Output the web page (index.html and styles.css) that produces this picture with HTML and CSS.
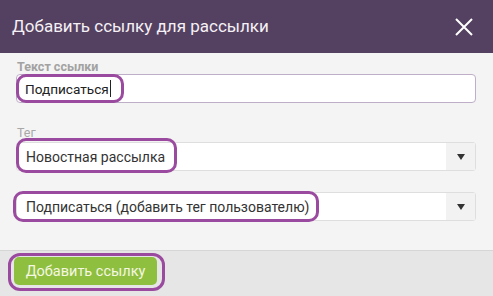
FILE: index.html
```html
<!DOCTYPE html>
<html lang="ru">
<head>
    <meta charset="UTF-8">
    <meta name="viewport" content="width=device-width, initial-scale=1.0">
    <title>Добавить ссылку для рассылки</title>
    <link rel="stylesheet" href="styles.css">
</head>
<body>
    <div class="modal">
        <div class="modal-head">
            <h2>Добавить ссылку для рассылки</h2>
            <svg class="close" width="20" height="20" viewBox="0 0 20 20">
                <path d="M2 2 L18 18 M18 2 L2 18" stroke="#fff" stroke-width="2" fill="none"/>
            </svg>
        </div>
        <div class="modal-body">
            <div class="field">
                <label class="lbl lbl-active">Текст ссылки</label>
                <div class="box box-input">
                    <span>Подписаться</span><span class="caret"></span>
                    <span class="mark mark-1"></span>
                </div>
            </div>
            <div class="field field-tag">
                <label class="lbl">Тег</label>
                <div class="box box-select">
                    <span class="val">Новостная рассылка</span>
                    <span class="arrow"></span>
                    <span class="mark mark-2"></span>
                </div>
            </div>
            <div class="field field-action">
                <div class="box box-select">
                    <span class="val">Подписаться (добавить тег пользователю)</span>
                    <span class="arrow"></span>
                    <span class="mark mark-3"></span>
                </div>
            </div>
        </div>
        <div class="modal-foot">
            <div class="btn-wrap">
                <button class="btn">Добавить ссылку</button>
                <span class="mark mark-4"></span>
            </div>
        </div>
    </div>
</body>
</html>
```

FILE: styles.css
```css
*{
    margin: 0;
    padding: 0;
    box-sizing: border-box;
    font-family: Roboto, "Liberation Sans", sans-serif;
}
body{
    width: 493px;
    height: 296px;
    background-color: #f4f4f4;
    overflow: hidden;
}
.modal{
    height: 296px;
    display: flex;
    flex-direction: column;
}
.modal-head{
    height: 53px;
    background-color: #544060;
    display: flex;
    align-items: center;
    justify-content: space-between;
    padding: 0 19px 0 12px;
}
.modal-head h2{
    color: #f4f0f5;
    font-size: 17px;
    font-weight: 400;
    margin-top: -1px;
}
.close{
    margin-top: 1px;
}
.modal-body{
    flex: 1;
    padding: 6px 17px 0 16px;
}
.lbl{
    display: block;
    font-size: 12.5px;
    line-height: 15px;
    color: #a8a8a8;
    padding-left: 1px;
}
.lbl-active{
    font-weight: 700;
    color: #a2a2a2;
}
.box{
    position: relative;
    height: 29px;
    background-color: #fff;
    display: flex;
    align-items: center;
    font-size: 14px;
    color: #333;
}
.box-input{
    border: 1px solid #bfaec8;
    border-radius: 4px;
    padding-left: 8px;
    font-size: 13.6px;
    color: #222;
}
.caret{
    width: 1px;
    height: 17px;
    background-color: #222;
    margin-left: 1px;
}
.field-tag{
    margin-top: 22px;
}
.field-tag .lbl{
    margin-bottom: 2px;
}
.field-action{
    margin-top: 21px;
}
.box-select{
    border: 1px solid #dedede;
    border-radius: 3px;
    padding-left: 9px;
}
.val{
    flex: 1;
}
.arrow{
    width: 29px;
    height: 27px;
    background-color: #f2f2f2;
    display: flex;
    align-items: center;
    justify-content: center;
}
.arrow::after{
    content: "";
    border-left: 4px solid transparent;
    border-right: 4px solid transparent;
    border-top: 6px solid #333;
}
.modal-foot{
    height: 46px;
    border-top: 1px solid #d6d6d6;
    background-color: #e6e6e6;
    padding: 6px 0 0 14px;
}
.btn-wrap{
    position: relative;
    display: inline-block;
}
.btn{
    width: 143px;
    height: 28px;
    border: none;
    border-radius: 5px;
    background-color: #8fbf3f;
    color: #f5f7e2;
    font-size: 14.5px;
}
/* annotation outlines drawn on top of the form */
.mark{
    position: absolute;
    border: 3.5px solid #9b4b9f;
    border-radius: 10px;
    pointer-events: none;
}
.mark-1{
    left: -1px;
    top: -1px;
    width: 108px;
    height: 29px;
}
.mark-2{
    left: -1px;
    top: -5px;
    width: 161px;
    height: 35px;
}
.mark-3{
    left: -4px;
    top: -2px;
    width: 306px;
    height: 31px;
}
.mark-4{
    left: -6px;
    top: -4px;
    width: 157px;
    height: 38px;
    border-radius: 12px;
}
```
